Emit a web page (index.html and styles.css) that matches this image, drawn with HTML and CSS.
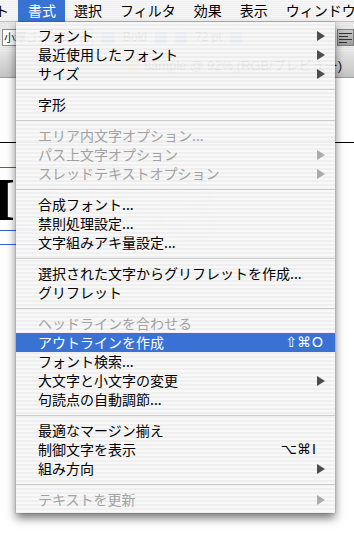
FILE: index.html
```html
<!DOCTYPE html>
<html lang="ja">
<head>
<meta charset="utf-8">
<title>書式メニュー</title>
<link rel="stylesheet" href="styles.css">
</head>
<body>
<div class="screen">
  <div class="menubar">
    <span class="mb-item mb-cut">ト</span>
    <span class="mb-item active">書式</span>
    <span class="mb-item">選択</span>
    <span class="mb-item">フィルタ</span>
    <span class="mb-item">効果</span>
    <span class="mb-item">表示</span>
    <span class="mb-item">ウィンドウ</span>
  </div>

  <div class="toolbar">
    <div class="font-field">小塚ゴシック Pro</div>
    <div class="popup-btn"></div>
    <span class="tb-text">Bold</span>
    <div class="popup-btn small"></div>
    <div class="popup-btn small"></div>
    <span class="tb-text">72 pt</span>
    <div class="popup-btn small"></div>
    <span class="tb-spacer"></span>
    <div class="align-btn">
      <svg width="13" height="11" viewBox="0 0 13 11"><path d="M0 1.5h13M0 4.5h9M0 7.5h13M0 10.5h8" stroke="#333" stroke-width="1"/></svg>
    </div>
  </div>

  <div class="titlebar">
    <span class="doc-icon"></span>
    <span class="title">sample @ 92% (RGB/プレビュー)</span>
  </div>

  <div class="doc">
    <div class="rule-black"></div>
    <div class="rule-blue first"></div>
    <div class="big-row">
      <span class="big-i">I</span>
      <span class="watermark">CS3</span>
    </div>
    <div class="rule-blue"></div>
    <div class="rule-blue second"></div>
  </div>

  <div class="menu">
    <div class="item"><span class="label">フォント</span><span class="arrow"><svg width="8" height="10" viewBox="0 0 8 10"><path d="M0 0L8 5L0 10Z"/></svg></span></div>
    <div class="item"><span class="label">最近使用したフォント</span><span class="arrow"><svg width="8" height="10" viewBox="0 0 8 10"><path d="M0 0L8 5L0 10Z"/></svg></span></div>
    <div class="item"><span class="label">サイズ</span><span class="arrow"><svg width="8" height="10" viewBox="0 0 8 10"><path d="M0 0L8 5L0 10Z"/></svg></span></div>
    <div class="sep"></div>
    <div class="item"><span class="label">字形</span></div>
    <div class="sep"></div>
    <div class="item disabled"><span class="label">エリア内文字オプション...</span></div>
    <div class="item disabled"><span class="label">パス上文字オプション</span><span class="arrow"><svg width="8" height="10" viewBox="0 0 8 10"><path d="M0 0L8 5L0 10Z"/></svg></span></div>
    <div class="item disabled"><span class="label">スレッドテキストオプション</span><span class="arrow"><svg width="8" height="10" viewBox="0 0 8 10"><path d="M0 0L8 5L0 10Z"/></svg></span></div>
    <div class="sep"></div>
    <div class="item"><span class="label">合成フォント...</span></div>
    <div class="item"><span class="label">禁則処理設定...</span></div>
    <div class="item"><span class="label">文字組みアキ量設定...</span></div>
    <div class="sep"></div>
    <div class="item"><span class="label">選択された文字からグリフレットを作成...</span></div>
    <div class="item"><span class="label">グリフレット</span></div>
    <div class="sep"></div>
    <div class="item disabled"><span class="label">ヘッドラインを合わせる</span></div>
    <div class="item selected"><span class="label">アウトラインを作成</span><span class="mods">⇧⌘</span><span class="key">O</span></div>
    <div class="item"><span class="label">フォント検索...</span></div>
    <div class="item"><span class="label">大文字と小文字の変更</span><span class="arrow"><svg width="8" height="10" viewBox="0 0 8 10"><path d="M0 0L8 5L0 10Z"/></svg></span></div>
    <div class="item"><span class="label">句読点の自動調節...</span></div>
    <div class="sep"></div>
    <div class="item"><span class="label">最適なマージン揃え</span></div>
    <div class="item"><span class="label">制御文字を表示</span><span class="mods">⌥⌘</span><span class="key">I</span></div>
    <div class="item"><span class="label">組み方向</span><span class="arrow"><svg width="8" height="10" viewBox="0 0 8 10"><path d="M0 0L8 5L0 10Z"/></svg></span></div>
    <div class="sep"></div>
    <div class="item disabled"><span class="label">テキストを更新</span><span class="arrow"><svg width="8" height="10" viewBox="0 0 8 10"><path d="M0 0L8 5L0 10Z"/></svg></span></div>
  </div>
</div>
</body>
</html>
```

FILE: styles.css
```css
html, body {
  margin: 0;
  padding: 0;
  background: #ffffff;
}

.screen {
  position: relative;
  width: 354px;
  height: 537px;
  overflow: hidden;
  font-family: "Noto Sans CJK JP", "Noto Sans", sans-serif;
  background: #ffffff;
}

/* ---------- menu bar ---------- */
.menubar {
  display: flex;
  height: 22px;
  box-sizing: border-box;
  background: repeating-linear-gradient(to bottom, #f7f7f7 0 1px, #efefef 1px 2px);
  border-bottom: 1px solid #bdbdbd;
  white-space: nowrap;
}

.mb-item {
  padding: 0 9px;
  font-size: 14px;
  line-height: 21px;
  height: 21px;
  color: #000;
  flex: none;
}

.mb-cut {
  margin-left: -14px;
}

.mb-item.active {
  background: #3a72d3;
  color: #fff;
  height: 22px;
  padding: 0 9px 0 10px;
}

/* ---------- toolbar (behind menu) ---------- */
.toolbar {
  display: flex;
  align-items: center;
  gap: 8px;
  height: 30px;
  padding: 0 0 0 2px;
  background: repeating-linear-gradient(to bottom, #ececec 0 1px, #e4e4e4 1px 2px);
}

.font-field {
  width: 88px;
  height: 15px;
  border: 1px solid #8c8c8c;
  background: #fff;
  font-size: 11px;
  line-height: 15px;
  color: #222;
  overflow: hidden;
  white-space: nowrap;
  padding-left: 1px;
}

.popup-btn {
  width: 14px;
  height: 14px;
  border-radius: 3px;
  background: linear-gradient(#a9c8f0, #4f8ad8);
}

.popup-btn.small {
  width: 12px;
}

.tb-text {
  font-family: "Liberation Sans", sans-serif;
  font-size: 12px;
  color: #333;
}

.tb-spacer {
  flex: 1;
}

.align-btn {
  width: 17px;
  height: 17px;
  display: flex;
  align-items: center;
  justify-content: center;
  background: linear-gradient(#c9c9c9, #9e9e9e);
  border: 1px solid #7d7d7d;
  box-sizing: border-box;
}

/* ---------- title bar ---------- */
.titlebar {
  display: flex;
  align-items: center;
  justify-content: flex-end;
  gap: 5px;
  height: 25px;
  padding-right: 12px;
  background: linear-gradient(#e3e3e3, #c4c4c4);
  border-bottom: 1px solid #9a9a9a;
  white-space: nowrap;
}

.doc-icon {
  width: 12px;
  height: 14px;
  background: #e8a64a;
  flex: none;
}

.title {
  font-family: "Liberation Sans", "Noto Sans CJK JP", sans-serif;
  font-size: 13px;
  color: #111;
}

/* ---------- document ---------- */
.doc {
  padding-top: 64px;
}

.rule-black {
  height: 1px;
  background: #000;
}

.rule-blue {
  width: 130px;
  height: 1px;
  background: #3d5bd6;
}

.rule-blue.first {
  margin-top: 24px;
}

.rule-blue.second {
  margin-top: 13px;
}

.big-row {
  display: flex;
  align-items: flex-end;
  height: 62px;
}

.big-i {
  font-family: "Liberation Serif", serif;
  font-weight: bold;
  font-size: 62px;
  line-height: 62px;
  margin-left: -9px;
  color: #000;
}

.watermark {
  font-family: "Liberation Sans", sans-serif;
  font-weight: bold;
  font-size: 96px;
  line-height: 96px;
  color: #e6e6e6;
  margin-left: 18px;
  margin-bottom: -24px;
}

/* ---------- dropdown menu ---------- */
.menu {
  position: absolute;
  top: 22px;
  left: 16px;
  width: 319px;
  padding: 4px 0;
  background:
    repeating-linear-gradient(to bottom, rgba(255,255,255,0.35) 0 2px, rgba(0,0,0,0.025) 2px 4px),
    rgba(244, 244, 244, 0.93);
  box-shadow: 0 5px 9px rgba(0,0,0,0.55), 0 0 1px rgba(0,0,0,0.45);
}

.item {
  display: flex;
  align-items: center;
  height: 19px;
  padding: 0 10px 0 22px;
  font-size: 14px;
  line-height: 19px;
  color: #000;
  white-space: nowrap;
}

.label {
  flex: 1;
}

.item.disabled {
  color: #a2a2a2;
}

.item.selected {
  background: #3a72d3;
  color: #fff;
}

.arrow {
  display: flex;
  width: 8px;
  height: 10px;
}

.arrow svg {
  fill: #4d4d4d;
}

.item.disabled .arrow svg {
  fill: #ababab;
}

.mods {
  font-family: "DejaVu Sans", sans-serif;
  font-size: 14px;
}

.key {
  width: 13px;
  font-family: "Liberation Sans", sans-serif;
  font-size: 14px;
  text-align: left;
  padding-left: 1px;
}

.sep {
  height: 12px;
  display: flex;
  align-items: center;
}

.sep::after {
  content: "";
  flex: 1;
  height: 1px;
  background: #cdcdcd;
}
```
